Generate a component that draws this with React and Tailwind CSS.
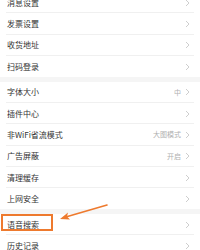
import React from 'react';

const font = { fontFamily: '"Noto Sans CJK SC", "Noto Sans", sans-serif' };

const Chevron = () => (
  <svg width="5" height="8" viewBox="0 0 5 8" className="shrink-0">
    <path d="M1 1l3 3-3 3" fill="none" stroke="#c8c8c8" strokeWidth="0.9" />
  </svg>
);

const Row = ({ label, value, last, highlight }) => (
  <div className="relative flex h-[21.3px] items-center pl-[7px] pr-[10px]">
    <span className="flex-1 text-[8px] leading-none text-[#333]">{label}</span>
    {value && <span className="mr-[4px] text-[7px] leading-none text-[#b0b0b0]">{value}</span>}
    <Chevron />
    {!last && <div className="absolute bottom-0 left-[6px] right-[6px] h-px bg-[#f0f0f0]" />}
    {highlight && (
      <div className="absolute left-[1px] top-[0px] h-[17px] w-[52px] border-2 border-[#ee7a2e]" />
    )}
  </div>
);

const groups = [
  [
    { label: '消息设置' },
    { label: '发票设置' },
    { label: '收货地址' },
    { label: '扫码登录' },
  ],
  [
    { label: '字体大小', value: '中' },
    { label: '插件中心' },
    { label: '非WiFi省流模式', value: '大图模式' },
    { label: '广告屏蔽', value: '开启' },
    { label: '清理缓存' },
    { label: '上网安全' },
  ],
  [
    { label: '语音搜索', highlight: true },
    { label: '历史记录' },
  ],
];

export default function App() {
  return (
    <div className="relative h-[250px] w-[200px] overflow-hidden bg-[#f5f5f5]" style={font}>
      <div className="-mt-[8px] flex flex-col gap-[4.5px]">
        {groups.map((g, i) => (
          <div key={i} className="bg-white">
            {g.map((r, j) => (
              <Row key={r.label} {...r} last={j === g.length - 1} />
            ))}
          </div>
        ))}
      </div>
      <svg className="absolute left-0 top-0" width="200" height="250">
        <line x1="107" y1="205" x2="64" y2="217.5" stroke="#ee7a2e" strokeWidth="1.6" strokeLinecap="round" />
        <path d="M60 219l8-6.5-1 4 3 3z" fill="#ee7a2e" />
      </svg>
    </div>
  );
}
